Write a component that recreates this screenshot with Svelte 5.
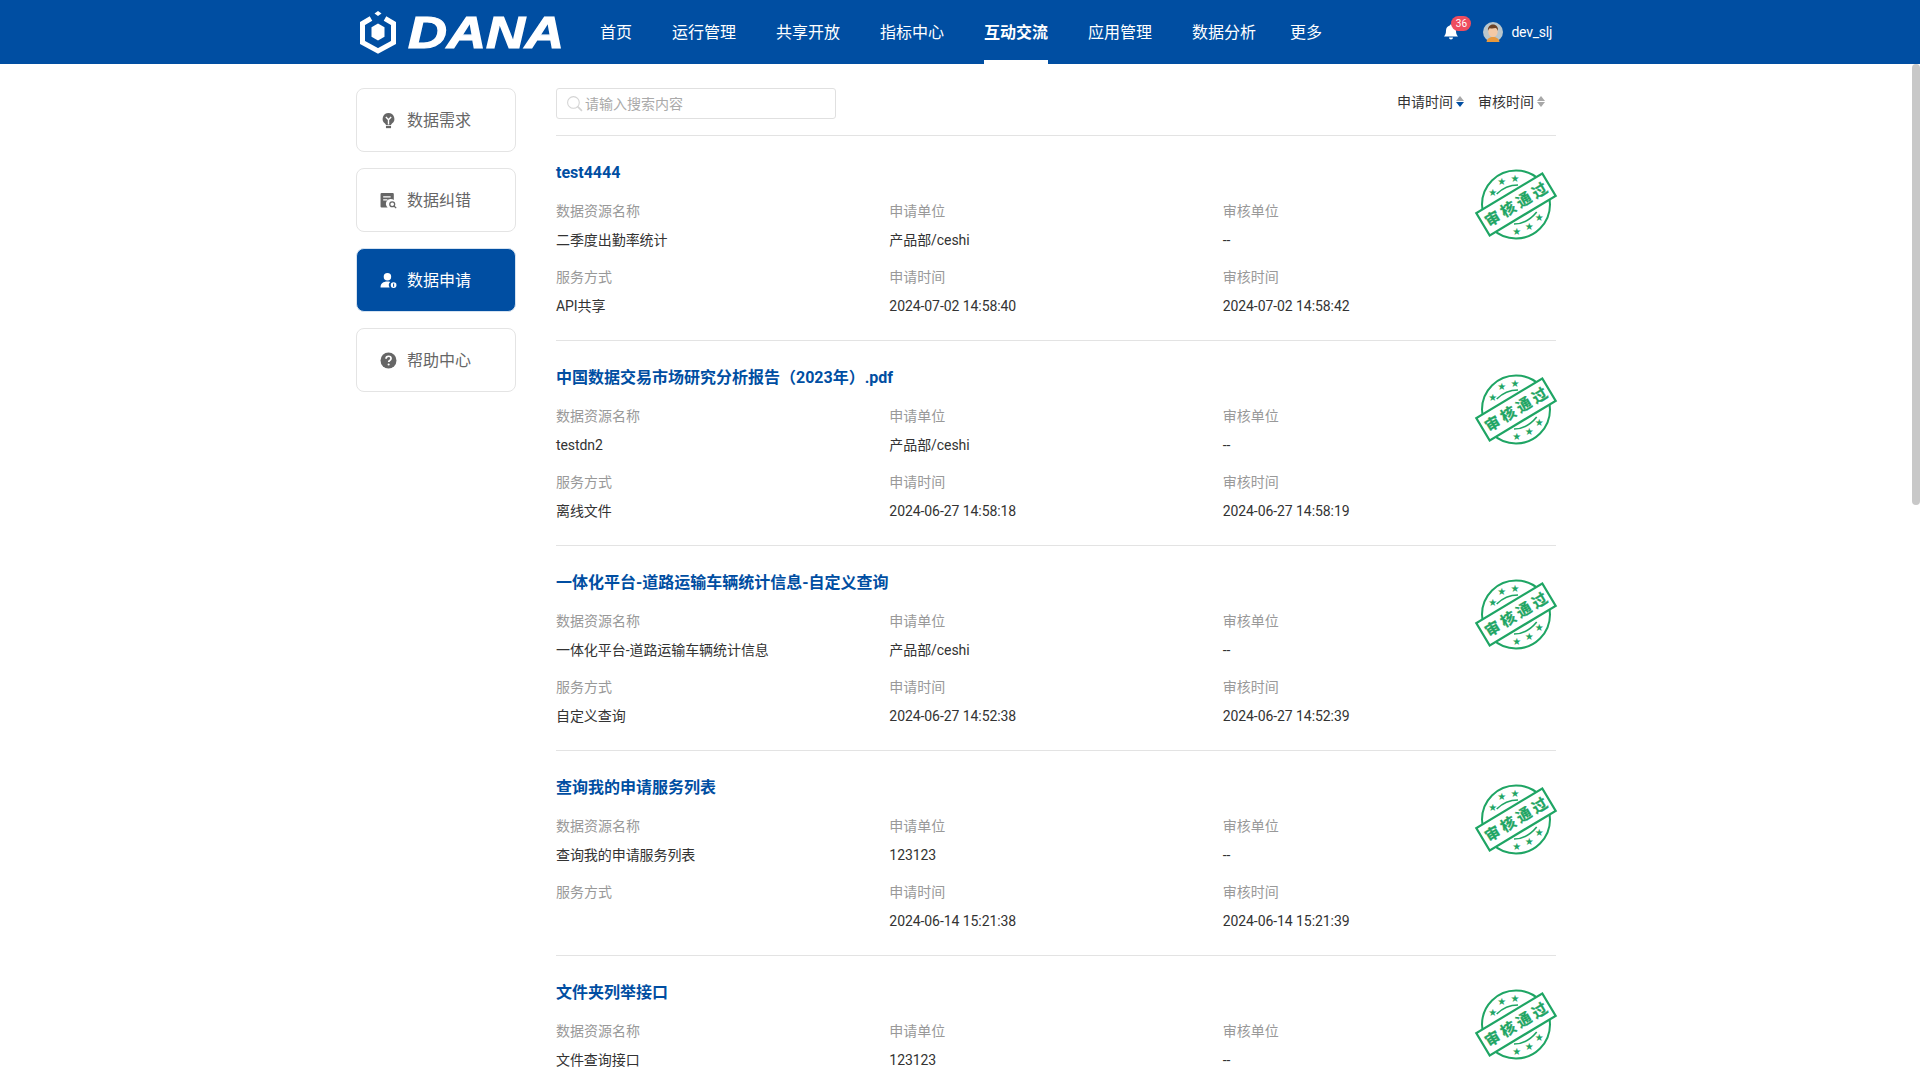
<script>
	const navItems = ['首页', '运行管理', '共享开放', '指标中心', '互动交流', '应用管理', '数据分析'];

	const menu = [
		{ key: 'need', label: '数据需求' },
		{ key: 'fix', label: '数据纠错' },
		{ key: 'apply', label: '数据申请' },
		{ key: 'help', label: '帮助中心' }
	];

	const records = [
		{ title: 'test4444', name: '二季度出勤率统计', org: '产品部/ceshi', service: 'API共享', applied: '2024-07-02 14:58:40', reviewed: '2024-07-02 14:58:42' },
		{ title: '中国数据交易市场研究分析报告（2023年）.pdf', name: 'testdn2', org: '产品部/ceshi', service: '离线文件', applied: '2024-06-27 14:58:18', reviewed: '2024-06-27 14:58:19' },
		{ title: '一体化平台-道路运输车辆统计信息-自定义查询', name: '一体化平台-道路运输车辆统计信息', org: '产品部/ceshi', service: '自定义查询', applied: '2024-06-27 14:52:38', reviewed: '2024-06-27 14:52:39' },
		{ title: '查询我的申请服务列表', name: '查询我的申请服务列表', org: '123123', service: '', applied: '2024-06-14 15:21:38', reviewed: '2024-06-14 15:21:39' },
		{ title: '文件夹列举接口', name: '文件查询接口', org: '123123' }
	];
</script>

<div class="page">
	<header class="topbar">
		<div class="topbar-inner">
			<div class="logo">
				<svg class="logo-mark" viewBox="0 0 36 44" width="36" height="44" aria-hidden="true">
					<path d="M18 1l3.500 2.500L18 6l-3.500-2.500z" fill="#fff" />
					<path d="M11 8.500L2.500 13.500v19L18 41l15.500-8.500v-19L25 8.500" fill="none" stroke="#fff" stroke-width="5" />
					<path d="M18 13.500l6.500 3.800v9.400L18 30.500l-6.500-3.800v-9.400z" fill="#fff" />
				</svg>
				<span class="logo-text">DANA</span>
			</div>
			<nav class="nav">
				{#each navItems as item}
					<span class="nav-item" class:active={item === '互动交流'}>{item}</span>
				{/each}
				<span class="nav-item more">更多</span>
			</nav>
			<div class="user">
				<span class="bell">
					<svg viewBox="0 0 16 16" width="16" height="16" aria-hidden="true">
						<path d="M8 0.500c.7 0 1.200.5 1.200 1.100C11.500 2.100 13 4 13 6.500c0 3 .6 4.500 2 6H1c1.400-1.500 2-3 2-6 0-2.500 1.500-4.400 3.800-4.900C6.800 1 7.300.5 8 .5zM6 13.500h4c0 1.100-.9 2-2 2s-2-.9-2-2z" fill="#fff" />
					</svg>
					<span class="badge">36</span>
				</span>
				<svg class="avatar" viewBox="0 0 20 20" width="20" height="20" aria-hidden="true">
					<circle cx="10" cy="10" r="10" fill="#b9c6cc" />
					<path d="M3.500 20c.5-3.500 3-5 6.500-5s6 1.500 6.500 5z" fill="#e8993c" />
					<ellipse cx="10" cy="9.500" rx="4.700" ry="5.500" fill="#f3c9a5" />
					<path d="M5 9c-.6-4 2-6.500 5-6.500S15.600 5 15 9c-.6-1.800-1.500-2.800-2.500-3-2 .6-4.500.6-5.500.2C6 6.500 5.400 7.500 5 9z" fill="#6b4226" />
				</svg>
				<span class="username">dev_slj</span>
			</div>
		</div>
	</header>

	<div class="scroller">
		<div class="container">
			<aside class="sidebar">
				{#each menu as entry}
					<div class="menu-card" class:selected={entry.key === 'apply'}>
						<svg class="menu-icon" viewBox="0 0 16 16" width="17" height="17" aria-hidden="true">
							{#if entry.key === 'need'}
								<path d="M8 1a5.500 5.500 0 0 1 3.300 9.900c-.5.400-.8.800-.9 1.300H5.600c-.1-.5-.4-.9-.9-1.300A5.500 5.500 0 0 1 8 1z" fill="currentColor" />
								<path d="M5.600 13h4.800v2.200H5.600z" fill="currentColor" />
								<path d="M5.500 4.800L8 7.300l2.500-2.500M8 7.300v4.500" fill="none" stroke="#fff" stroke-width="1.300" />
							{:else if entry.key === 'fix'}
								<path d="M1.500 1h10.500a1 1 0 0 1 1 1v5.600a4.500 4.500 0 0 0-5.800 7.100H1.500a1 1 0 0 1-1-1V2a1 1 0 0 1 1-1z" fill="currentColor" />
								<path d="M3 4.500h7M3 7.500h4" stroke="#fff" stroke-width="1.200" />
								<circle cx="11.500" cy="11.500" r="2.300" fill="none" stroke="currentColor" stroke-width="1.200" />
								<path d="M13.200 13.200l2 2" stroke="currentColor" stroke-width="1.200" />
							{:else if entry.key === 'apply'}
								<circle cx="7" cy="4.500" r="3.500" fill="currentColor" />
								<path d="M.5 14.500c0-3.500 2.500-5.500 6.500-5.500 1 0 1.900.1 2.700.4a3.500 3.500 0 0 0-.6 5.100H.5z" fill="currentColor" />
								<circle cx="12.800" cy="12.300" r="2.700" fill="currentColor" />
								<path d="M12.800 10.800v3" stroke="#004ea2" stroke-width="1" />
							{:else}
								<circle cx="8" cy="8" r="7.500" fill="currentColor" />
								<path d="M5.700 6.300c0-1.400 1-2.300 2.400-2.300s2.300.8 2.300 2c0 1-.6 1.500-1.300 2-.6.400-.9.700-.9 1.500" fill="none" stroke="#fff" stroke-width="1.600" />
								<circle cx="8.100" cy="11.800" r="1" fill="#fff" />
							{/if}
						</svg>
						<span class="menu-label">{entry.label}</span>
					</div>
				{/each}
			</aside>

			<main class="content">
				<div class="toolbar">
					<label class="search">
						<svg viewBox="0 0 16 16" width="17" height="17" aria-hidden="true">
							<circle cx="7" cy="7" r="5.500" fill="none" stroke="#d4d4d4" stroke-width="1" />
							<path d="M11 11l4 4" stroke="#d4d4d4" stroke-width="1.500" />
						</svg>
						<input type="text" placeholder="请输入搜索内容" />
					</label>
					<div class="sorts">
						<span class="sort">申请时间
							<span class="carets"><i class="up"></i><i class="down on"></i></span>
						</span>
						<span class="sort">审核时间
							<span class="carets"><i class="up"></i><i class="down"></i></span>
						</span>
					</div>
				</div>

				{#each records as record}
					<article class="record">
						<h3 class="record-title">{record.title}</h3>
						<div class="meta">
							<div class="cell"><div class="label">数据资源名称</div><div class="value">{record.name}</div></div>
							<div class="cell"><div class="label">申请单位</div><div class="value">{record.org}</div></div>
							<div class="cell"><div class="label">审核单位</div><div class="value">--</div></div>
							{#if record.applied}
								<div class="cell"><div class="label">服务方式</div><div class="value">{record.service}</div></div>
								<div class="cell"><div class="label">申请时间</div><div class="value">{record.applied}</div></div>
								<div class="cell"><div class="label">审核时间</div><div class="value">{record.reviewed}</div></div>
							{/if}
						</div>
						<svg class="stamp" viewBox="0 0 80 72" width="80" height="72" aria-hidden="true">
							<circle cx="40" cy="35.500" r="34" fill="none" stroke="#1fa564" stroke-width="2" />
							<path d="M20.700 25c5-5 13-9 21.300-9" fill="none" stroke="#1fa564" stroke-width="1.600" />
							<path d="M38 55c8.500 0 17-5 22.700-12" fill="none" stroke="#1fa564" stroke-width="1.600" />
							<g fill="#1fa564" font-size="10" text-anchor="middle" font-family="DejaVu Sans, sans-serif">
								<text x="16.700" y="26.500">★</text>
								<text x="25.700" y="16">★</text>
								<text x="39" y="13">★</text>
								<text x="40.700" y="65.500">★</text>
								<text x="53.300" y="61">★</text>
								<text x="63.300" y="51.500">★</text>
							</g>
							<g transform="rotate(-31 40 35.500)">
								<rect x="1.500" y="22.500" width="77" height="26" fill="#fff" stroke="#1fa564" stroke-width="2.200" />
								<text x="41.700" y="41" class="stamp-text" text-anchor="middle">审核通过</text>
							</g>
						</svg>
					</article>
				{/each}
			</main>
		</div>
	</div>

	<div class="scroll-thumb"></div>
</div>

<style>
	:global(body) {
		margin: 0;
		font-family: Roboto, 'Noto Sans CJK SC', sans-serif;
		color: #333;
		background: #fff;
	}

	.page {
		position: relative;
		height: 100vh;
		overflow: hidden;
	}

	.topbar {
		height: 64px;
		background: #004ea2;
		color: #fff;
	}

	.topbar-inner {
		width: 1200px;
		height: 100%;
		margin-left: 356px;
		display: flex;
		align-items: center;
	}

	.logo {
		display: flex;
		align-items: center;
		width: 244px;
		padding-left: 4px;
		box-sizing: border-box;
	}

	.logo-mark {
		flex: none;
	}

	.logo-text {
		display: inline-block;
		margin-left: 12px;
		font-family: 'Liberation Sans', sans-serif;
		font-size: 45px;
		font-weight: 700;
		font-style: italic;
		line-height: 1;
		transform: scaleX(1.2);
		transform-origin: left center;
		-webkit-text-stroke: 1.2px #fff;
	}

	.nav {
		display: flex;
		height: 100%;
		gap: 40px;
	}

	.nav-item {
		position: relative;
		font-size: 16px;
		line-height: 65px;
	}

	.nav-item.active {
		font-weight: 700;
	}

	.nav-item.active::after {
		content: '';
		position: absolute;
		left: 0;
		right: 0;
		bottom: 0;
		height: 4px;
		background: #fff;
	}

	.nav-item.more {
		margin-left: -6px;
	}

	.user {
		display: flex;
		align-items: center;
		margin-left: auto;
		margin-right: 4px;
	}

	.bell {
		position: relative;
		display: flex;
		margin-right: 24px;
	}

	.badge {
		position: absolute;
		left: 8px;
		top: -8px;
		width: 20px;
		height: 15px;
		border-radius: 8px;
		background: #ee4d5f;
		font-size: 10px;
		line-height: 15px;
		text-align: center;
	}

	.username {
		margin-left: 8px;
		font-size: 14px;
		letter-spacing: -0.25px;
	}

	.scroller {
		height: calc(100vh - 64px);
		padding-right: 8px;
		box-sizing: border-box;
		overflow: hidden;
	}

	.scroll-thumb {
		position: absolute;
		top: 64px;
		right: 0;
		width: 8px;
		height: 441px;
		border-radius: 4px;
		background: #c8c8c8;
	}

	.container {
		display: flex;
		gap: 40px;
		width: 1200px;
		margin: 0 auto;
		padding-top: 24px;
	}

	.sidebar {
		flex: none;
		display: flex;
		flex-direction: column;
		gap: 16px;
		width: 160px;
	}

	.menu-card {
		display: flex;
		align-items: center;
		gap: 10px;
		height: 64px;
		box-sizing: border-box;
		padding-left: 23px;
		border: 1px solid #e4e4e4;
		border-radius: 8px;
		color: #666;
		font-size: 16px;
	}

	.menu-label {
		position: relative;
		top: -1px;
	}

	.menu-card.selected {
		background: #004ea2;
		color: #fff;
		border-color: #d5e2f0;
	}

	.menu-icon {
		flex: none;
	}

	.content {
		flex: 1;
		min-width: 0;
	}

	.toolbar {
		display: flex;
		justify-content: space-between;
		padding-bottom: 16px;
		border-bottom: 1px solid #e3e3e3;
	}

	.search {
		display: flex;
		align-items: center;
		gap: 2px;
		width: 280px;
		height: 31px;
		box-sizing: border-box;
		padding-left: 9px;
		border: 1px solid #e0e0e0;
		border-radius: 3px;
	}

	.search input {
		flex: 1;
		min-width: 0;
		padding: 0;
		border: 0;
		outline: 0;
		font: inherit;
		font-size: 14px;
	}

	.search input::placeholder {
		color: #aaa;
	}

	.sorts {
		display: flex;
		gap: 14px;
		padding-right: 11px;
		height: 26px;
	}

	.sort {
		display: inline-flex;
		align-items: center;
		gap: 3px;
		font-size: 14px;
		color: #333;
	}

	.carets {
		display: inline-flex;
		flex-direction: column;
		gap: 1px;
	}

	.carets i {
		display: block;
		width: 0;
		height: 0;
		border-left: 4.5px solid transparent;
		border-right: 4.5px solid transparent;
	}

	.carets .up {
		border-bottom: 5px solid #a8a8a8;
	}

	.carets .down {
		border-top: 5px solid #a8a8a8;
	}

	.carets .down.on {
		border-top-color: #004ea2;
	}

	.record {
		position: relative;
		height: 205px;
		box-sizing: border-box;
		padding-top: 25px;
		border-bottom: 1px solid #e3e3e3;
	}

	.record-title {
		margin: 0 0 15px;
		color: #004ea2;
		font-size: 16px;
		font-weight: 700;
		line-height: 24px;
	}

	.meta {
		display: grid;
		grid-template-columns: repeat(3, 1fr);
		row-gap: 15px;
	}

	.label,
	.value {
		min-height: 22px;
		font-size: 14px;
		line-height: 22px;
	}

	.label {
		color: #999;
	}

	.value {
		margin-top: 7px;
		color: #333;
		letter-spacing: -0.07px;
	}

	.stamp {
		position: absolute;
		top: 33px;
		right: 0;
		overflow: visible;
	}

	.stamp-text {
		fill: #1fa564;
		stroke: #1fa564;
		stroke-width: 0.3px;
		font-size: 15px;
		font-weight: 700;
		letter-spacing: 3.3px;
	}
</style>
